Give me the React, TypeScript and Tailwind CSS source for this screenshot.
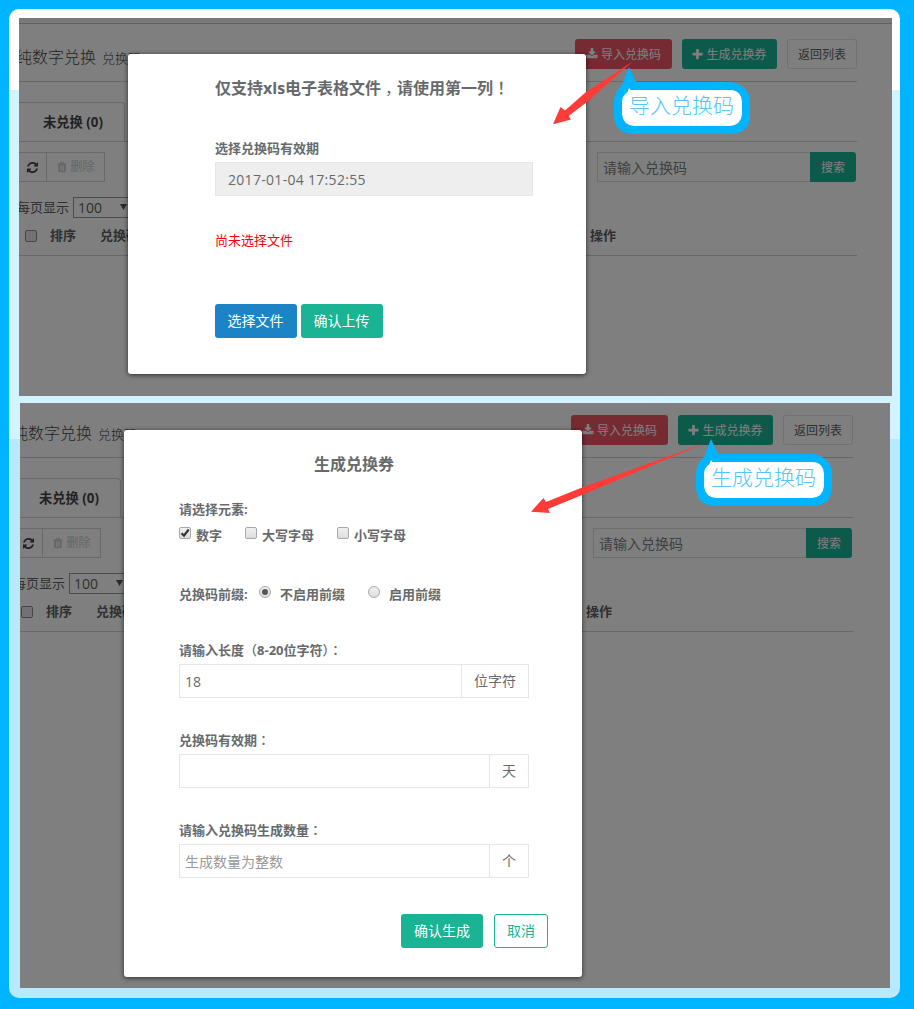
import type { ReactNode } from "react";

const DOWNLOAD =
  "M1344 1344q0-26-19-45t-45-19-45 19-19 45 19 45 45 19 45-19 19-45zm256 0q0-26-19-45t-45-19-45 19-19 45 19 45 45 19 45-19 19-45zm128-224v320q0 40-28 68t-68 28h-1472q-40 0-68-28t-28-68v-320q0-40 28-68t68-28h465l135 136q58 56 136 56t136-56l136-136h464q40 0 68 28t28 68zm-325-569q17 41-14 70l-448 448q-18 19-45 19t-45-19l-448-448q-31-29-14-70 17-39 59-39h256v-448q0-26 19-45t45-19h256q26 0 45 19t19 45v448h256q42 0 59 39z";
const PLUS =
  "M1600 736v192q0 40-28 68t-68 28h-416v416q0 40-28 68t-68 28h-192q-40 0-68-28t-28-68v-416h-416q-40 0-68-28t-28-68v-192q0-40 28-68t68-28h416v-416q0-40 28-68t68-28h192q40 0 68 28t28 68v416h416q40 0 68 28t28 68z";
const TRASH =
  "M704 1376v-704q0-14-9-23t-23-9h-64q-14 0-23 9t-9 23v704q0 14 9 23t23 9h64q14 0 23-9t9-23zm256 0v-704q0-14-9-23t-23-9h-64q-14 0-23 9t-9 23v704q0 14 9 23t23 9h64q14 0 23-9t9-23zm256 0v-704q0-14-9-23t-23-9h-64q-14 0-23 9t-9 23v704q0 14 9 23t23 9h64q14 0 23-9t9-23zm-544-992h448l-48-117q-7-9-17-11h-317q-10 2-17 11zm928 32v64q0 14-9 23t-23 9h-96v948q0 83-47 143.5t-113 60.5h-832q-66 0-113-58.5t-47-141.5v-952h-96q-14 0-23-9t-9-23v-64q0-14 9-23t23-9h309l70-167q15-37 54-63t79-26h320q40 0 79 26t54 63l70 167h309q14 0 23 9t9 23z";
const REFRESH =
  "M1639 1056q0 5-1 7-64 268-268 434.5t-478 166.5q-146 0-282.5-55t-243.5-157l-129 129q-19 19-45 19t-45-19-19-45v-448q0-26 19-45t45-19h448q26 0 45 19t19 45-19 45l-137 137q71 66 161 102t187 36q134 0 250-65t186-179q11-17 53-117 8-23 30-23h192q13 0 22.5 9.5t9.5 22.5zm25-800v448q0 26-19 45t-45 19h-448q-26 0-45-19t-19-45 19-45l138-138q-148-137-349-137-134 0-250 65t-186 179q-11 17-53 117-8 23-30 23h-199q-13 0-22.5-9.5t-9.5-22.5v-7q65-268 270-434.5t480-166.5q146 0 284 55.5t245 156.5l130-129q19-19 45-19t45 19 19 45z";

function Icon({ d, className }: { d: string; className: string }) {
  return (
    <svg viewBox="0 0 1792 1792" className={`shrink-0 fill-current ${className}`}>
      <path d={d} />
    </svg>
  );
}

/* Full-width punctuation centred in its em box */
function P({ children }: { children: ReactNode }) {
  return <span className="font-['Noto_Sans_CJK_TC',sans-serif] font-medium">{children}</span>;
}

function ListPage() {
  return (
    <div className="w-[873px] shrink-0 text-[13px] whitespace-nowrap text-[#5d6062]">
      <div className="h-[6px] border-b border-[#c4c4c6] bg-[#f3f3f4]" />
      <div className="flex h-[58px] w-[838px] justify-between border-b border-[#cfd0d1]">
        <div className="-ml-[3px] flex h-[65px] items-center text-[16px] leading-none font-light text-[#444648]">
          纯数字兑换<span className="mt-[3px] ml-[6px] text-[13px]">兑换码</span>
        </div>
        <div className="mt-[15px] flex h-[30px] gap-[10px] text-[12px] leading-none">
          <div className="flex w-[97px] items-center justify-center gap-[3px] rounded-[3px] bg-[#ed5565] text-white">
            <Icon d={DOWNLOAD} className="size-[12px]" />
            <span className="mt-[2px]">导入兑换码</span>
          </div>
          <div className="flex w-[95px] items-center justify-center gap-[2px] rounded-[3px] bg-[#1ab394] text-white">
            <Icon d={PLUS} className="size-[13px]" />
            <span className="mt-[2px] mr-[1px]">生成兑换券</span>
          </div>
          <div className="flex w-[70px] items-center justify-center rounded-[3px] border border-[#e0e2e4] pt-[2px]">
            返回列表
          </div>
        </div>
      </div>
      <div className="mt-[20px] flex h-[40px] w-[838px] border-b border-[#d2d3d4]">
        <div className="flex w-[106px] items-center rounded-tr-[4px] border-t border-r border-[#d2d3d4] pt-px pl-[24px] text-[13.300px] font-bold text-[#444]">
          未兑换 (0)
        </div>
      </div>
      <div className="mt-[10px] flex h-[30px] w-[837px] justify-between">
        <div className="flex border-y border-[#d2d3d4]">
          <div className="flex w-[28px] items-center border-r border-[#d2d3d4] pl-[7px] text-[#444]">
            <Icon d={REFRESH} className="size-[13px]" />
          </div>
          <div className="flex w-[58px] items-center justify-center gap-[2px] border-r border-[#d2d3d4] text-[12px] text-[#cbccce]">
            <Icon d={TRASH} className="size-[12px]" />
            删除
          </div>
        </div>
        <div className="flex">
          <div className="flex w-[213px] items-center border border-r-0 border-[#dcdee0] pl-[5px] text-[14px] text-[#808080]">
            请输入兑换码
          </div>
          <div className="flex w-[46px] items-center justify-center rounded-r-[3px] bg-[#1ab394] pt-[2px] text-[12px] text-white">
            搜索
          </div>
        </div>
      </div>
      <div className="mt-[15px] -ml-[2px] flex h-[21px] items-center gap-[4px]">
        <span>每页显示</span>
        <div className="flex h-[21px] w-[64px] items-center justify-between border border-[#999] pl-[4px] font-['Open_Sans',sans-serif] text-[14px]">
          100
          <svg viewBox="0 0 7 6" className="mr-[9px] mb-[2px] h-[6px] w-[7px] fill-[#555]">
            <path d="M0 0h7L3.500 6z" />
          </svg>
        </div>
      </div>
      <div className="flex h-[38px] w-[838px] items-center border-b border-[#cfd0d1] pb-px pl-[6px] font-bold">
        <span className="size-[12px] rounded-[2px] border border-[#8c8c8c] bg-[#e4e4e4]" />
        <span className="ml-[13px] w-[50px]">排序</span>
        <span className="w-[490px]">兑换码</span>
        <span>操作</span>
      </div>
    </div>
  );
}

function Callout({ children }: { children: ReactNode }) {
  return (
    <div className="relative h-[68px] w-[136px]">
      <svg viewBox="0 0 136 68" className="absolute inset-0 h-[68px] w-[136px]">
        <path
          fill="#00b4ff"
          d="M15 0L22 15H115Q136 17 136 36V48Q136 67 115 67H21Q0 67 0 48V36Q0 25 8 18Z"
        />
        <path
          fill="#fff"
          d="M15 21L16.500 23H116Q127 23 128 35V47Q127 58 116 59H20Q9 58 8 47V35Q8 29 13.500 25Z"
        />
      </svg>
      <div className="relative flex h-[76px] items-center pl-[15px] text-[21px] leading-none font-light text-[#54c6f8]">
        {children}
      </div>
    </div>
  );
}

function Check({ on, children }: { on?: boolean; children: ReactNode }) {
  return (
    <div className="flex items-center gap-[5px]">
      <span className="mb-[4px] flex size-[12px] items-center justify-center rounded-[2px] border border-[#a9a9a9] bg-linear-to-b from-[#f0f0f0] to-[#dedede]">
        {on && (
          <svg viewBox="0 0 10 10" className="size-[10px] shrink-0 fill-none stroke-[#333] stroke-[2.200]">
            <path d="M1.500 5.200L4 7.700L8.700 1.500" />
          </svg>
        )}
      </span>
      <span className="mt-px">{children}</span>
    </div>
  );
}

function Radio({ on }: { on?: boolean }) {
  return (
    <span className="mb-[4px] flex size-[12px] items-center justify-center rounded-full border border-[#a9a9a9] bg-linear-to-b from-[#f0f0f0] to-[#dedede]">
      {on && <span className="size-[6px] rounded-full bg-[#555]" />}
    </span>
  );
}

function Field({ label, value, unit, hint }: { label: ReactNode; value?: string; unit: string; hint?: boolean }) {
  return (
    <div className="w-[350px]">
      <div className="flex h-[28px] items-center font-bold">
        <span>{label}</span>
      </div>
      <div className="flex h-[34px] border border-[#e5e6e7] text-[14px]">
        <div className={`flex flex-1 items-center pl-[5px] ${hint ? "text-[#999]" : ""}`}>{value}</div>
        <div className="flex items-center border-l border-[#e5e6e7] px-[12px] pb-px">{unit}</div>
      </div>
    </div>
  );
}

export default function App() {
  return (
    <div className="relative h-[1009px] w-[914px] overflow-hidden bg-[#00b4ff] pt-[9px] pl-[9px] font-['Open_Sans','Noto_Sans_CJK_SC',sans-serif] whitespace-nowrap text-[#676a6c]">
      <div className="flex h-[989px] w-[891px] flex-col gap-[7px] overflow-hidden rounded-[10px] bg-[linear-gradient(#fff_81px,#d2f3ff_81px,#d2f3ff_430px,#b8eaff_430px)] pt-[9px]">
        <section className="relative ml-[10px] h-[378px] w-[873px] overflow-hidden bg-white">
          <ListPage />
          <div className="absolute inset-0 bg-black/50" />
          <div className="absolute top-[36px] left-[109px] flex h-[320px] w-[458px] flex-col rounded-[3px] bg-white pl-[87px] text-[13px] shadow-[0_1px_5px_rgba(0,0,0,0.65)]">
            <h2 className="mt-[19px] h-[29px] text-[16px] leading-[28px] font-bold">
              仅支持xls电子表格文件<span className="relative left-[4px] font-normal">，</span>请使用第一列<P>！</P>
            </h2>
            <div className="mt-[32px] h-[28px] leading-[28px] font-bold">选择兑换码有效期</div>
            <div className="flex h-[34px] w-[318px] items-center border border-[#e5e6e7] bg-[#eee] pl-[12px] text-[14px] tracking-[0.300px]">
              2017-01-04 17:52:55
            </div>
            <div className="mt-[34px] h-[21px] leading-[20px] text-[#f00]">尚未选择文件</div>
            <div className="mt-[53px] flex h-[34px] gap-[4px] text-[14px] text-white">
              <button className="w-[82px] rounded-[3px] bg-[#1c84c6] pr-px pb-[2px]">选择文件</button>
              <button className="w-[82px] rounded-[3px] bg-[#1ab394] pr-px pb-[2px]">确认上传</button>
            </div>
          </div>
        </section>
        <section className="relative ml-[11px] h-[585px] w-[870px] overflow-hidden bg-white">
          <div className="-mt-[9px] -ml-[5px]">
            <ListPage />
          </div>
          <div className="absolute inset-0 bg-black/50" />
          <div className="absolute top-[27px] left-[104px] flex h-[547px] w-[458px] flex-col rounded-[3px] bg-white pl-[55px] text-[13px] shadow-[0_1px_5px_rgba(0,0,0,0.65)]">
            <h2 className="mt-[20px] -ml-[55px] h-[28px] w-[460px] text-center text-[16px] leading-[28px] font-bold">
              生成兑换券
            </h2>
            <div className="mt-[18px] h-[26px] leading-[26px] font-bold">请选择元素:</div>
            <div className="flex h-[26px] items-center gap-[23px] font-bold">
              <Check on>数字</Check>
              <Check>大写字母</Check>
              <Check>小写字母</Check>
            </div>
            <div className="mt-[32px] flex h-[28px] items-center font-bold">
              <span className="mt-px w-[80px]">兑换码前缀:</span>
              <Radio on />
              <span className="mt-px ml-[9px] w-[88px]">不启用前缀</span>
              <Radio />
              <span className="mt-px ml-[9px]">启用前缀</span>
            </div>
            <div className="mt-[28px] flex flex-col gap-[28px]">
              <Field
                label={
                  <>
                    请输入长度<P>（</P>8-20位字符<P>）</P>
                    <P>：</P>
                  </>
                }
                value="18"
                unit="位字符"
              />
              <Field
                label={
                  <>
                    兑换码有效期<P>：</P>
                  </>
                }
                unit="天"
              />
              <Field
                label={
                  <>
                    请输入兑换码生成数量<P>：</P>
                  </>
                }
                value="生成数量为整数"
                unit="个"
                hint
              />
            </div>
            <div className="mt-[36px] ml-[222px] flex h-[34px] gap-[11px] text-[14px]">
              <button className="w-[82px] rounded-[3px] bg-[#1ab394] pb-[2px] text-white">确认生成</button>
              <button className="w-[54px] rounded-[3px] border border-[#1ab394] pb-[2px] text-[#1ab394]">取消</button>
            </div>
          </div>
        </section>
      </div>
      <div className="absolute top-[67px] left-[614px]">
        <Callout>导入兑换码</Callout>
      </div>
      <div className="absolute top-[439px] left-[696px]">
        <Callout>生成兑换码</Callout>
      </div>
      <svg viewBox="0 0 914 1009" className="pointer-events-none absolute inset-0 h-[1009px] w-[914px] fill-[#ff3b38]">
        <path d="M553 124.300L560.500 107L565 110.500L586 92L632 62L587 102L568.500 116L571 119.500Z" />
        <path d="M531 511.700L543.500 498L546 502L582 487.500L704 443.500L582 495L548 509L550 513Z" />
      </svg>
    </div>
  );
}
